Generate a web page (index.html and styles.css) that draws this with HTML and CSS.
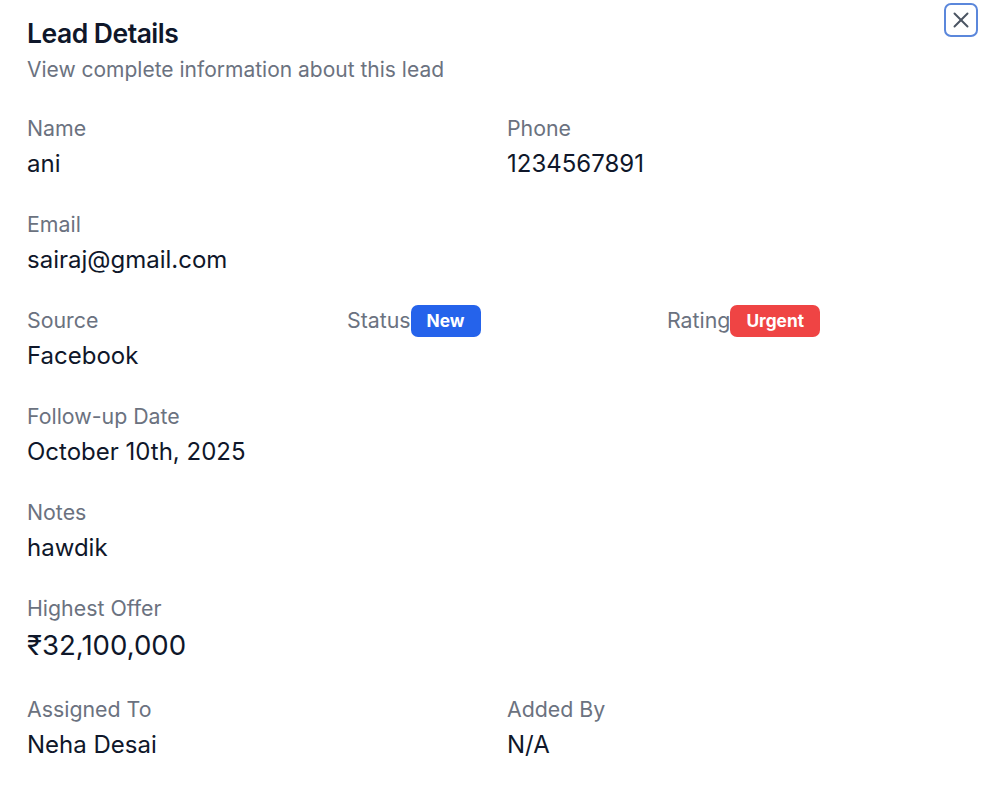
FILE: index.html
```html
<!DOCTYPE html>
<html>
<head>
<meta charset="utf-8">
<link rel="stylesheet" href="styles.css">
</head>
<body>
<div class="dialog">
  <header class="head">
    <h1 class="title">Lead Details</h1>
    <p class="subtitle">View complete information about this lead</p>
  </header>
  <button class="close" aria-label="Close">
    <svg width="26" height="26" viewBox="0 0 24 24" fill="none" stroke="currentColor" stroke-width="1.8" stroke-linecap="round" stroke-linejoin="round"><path d="M18 6 6 18"/><path d="m6 6 12 12"/></svg>
  </button>
  <div class="rows">
    <div class="grid two">
      <div class="field"><div class="label">Name</div><div class="value">ani</div></div>
      <div class="field"><div class="label">Phone</div><div class="value">1234567891</div></div>
    </div>
    <div class="field"><div class="label">Email</div><div class="value">sairaj@gmail.com</div></div>
    <div class="grid three">
      <div class="field"><div class="label">Source</div><div class="value">Facebook</div></div>
      <div class="field"><div class="label inline">Status<span class="badge blue">New</span></div></div>
      <div class="field"><div class="label inline">Rating<span class="badge red">Urgent</span></div></div>
    </div>
    <div class="field"><div class="label">Follow-up Date</div><div class="value">October 10th, 2025</div></div>
    <div class="field"><div class="label">Notes</div><div class="value">hawdik</div></div>
    <div class="field tight"><div class="label">Highest Offer</div><div class="value big">₹32,100,000</div></div>
    <div class="grid two">
      <div class="field"><div class="label">Assigned To</div><div class="value">Neha Desai</div></div>
      <div class="field"><div class="label">Added By</div><div class="value">N/A</div></div>
    </div>
  </div>
</div>
</body>
</html>
```
FILE: styles.css
```css
* { box-sizing: border-box; }
html, body { margin: 0; background: #fff; }
body { font-family: Inter, "Noto Sans", sans-serif; color: #0f172a; }
.dialog { position: relative; padding: 15px 27px 20px; width: 994px; }
.head { margin-bottom: 29px; }
.title { margin: 0; font-size: 26.5px; line-height: 36px; font-weight: 600; letter-spacing: -0.5px; }
.subtitle { margin: 4px 0 0; font-size: 21px; line-height: 30px; color: #6b7280; }
.close { position: absolute; top: 3px; right: 16px; width: 34px; height: 34px; padding: 0; border: 2px solid #5b87db; border-radius: 7px; background: #fff; color: #4b5563; display: flex; align-items: center; justify-content: center; }
.rows { display: flex; flex-direction: column; gap: 30px; }
.grid { display: grid; column-gap: 20px; }
.two { grid-template-columns: 1fr 1fr; }
.three { grid-template-columns: 1fr 1fr 1fr; }
.field { display: flex; flex-direction: column; gap: 6px; }
.field.tight { gap: 3px; }
.label { font-size: 21.33px; line-height: 28px; color: #6b7280; }
.label.inline { display: flex; align-items: center; height: 28px; }
.value { font-size: 24px; line-height: 32px; color: #0f172a; }
.value.big { font-size: 27.6px; line-height: 40px; }
.badge { display: inline-flex; align-items: center; justify-content: center; flex-shrink: 0; height: 32px; padding: 0 16px; border-radius: 7px; color: #fff; font-size: 17.3px; font-weight: 700; position: relative; top: 1px; }
.blue { background: #2563eb; }
.red { background: #ef4444; }
```
